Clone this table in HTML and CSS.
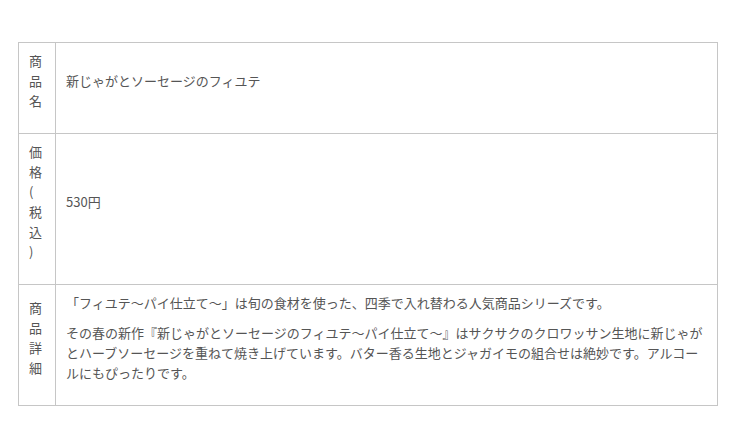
FILE: index.html
```html
<!DOCTYPE html>
<html lang="ja">
<head>
    <meta charset="UTF-8">
    <meta name="viewport" content="width=device-width, initial-scale=1.0">
    <title>商品情報</title>
    <link rel="stylesheet" href="styles.css">
</head>
<body>

<div class="wrap">
    <table class="spec-table">
        <tr>
            <th>商品名</th>
            <td><p>新じゃがとソーセージのフィユテ</p></td>
        </tr>
        <tr>
            <th>価格(税込)</th>
            <td><p>530円</p></td>
        </tr>
        <tr>
            <th>商品詳細</th>
            <td>
                <p>「フィユテ〜パイ仕立て〜」は旬の食材を使った、四季で入れ替わる人気商品シリーズです。</p>
                <p>その春の新作『新じゃがとソーセージのフィユテ〜パイ仕立て〜』はサクサクのクロワッサン生地に新じゃがとハーブソーセージを重ねて焼き上げています。バター香る生地とジャガイモの組合せは絶妙です。アルコールにもぴったりです。</p>
            </td>
        </tr>
    </table>
</div>

</body>
</html>
```

FILE: styles.css
```css
body {
    margin: 0;
    padding: 0;
    background-color: #fff;
    font-family: "Noto Sans CJK JP", "Noto Sans", sans-serif;
    font-size: 13px;
    line-height: 20px;
    color: #555;
}
.wrap {
    padding: 42px 22px 0 18px;
}
.spec-table {
    width: 700px;
    border-collapse: collapse;
    table-layout: fixed;
}
.spec-table th,
.spec-table td {
    border: 1px solid #c6c6c6;
    vertical-align: middle;
    text-align: left;
    font-weight: normal;
    padding: 8px 10px 12px;
}
.spec-table th {
    width: 16px;
    padding-bottom: 22px;
    line-break: anywhere;
    word-break: break-all;
}
.spec-table p {
    margin: 0 0 10px;
}
```
